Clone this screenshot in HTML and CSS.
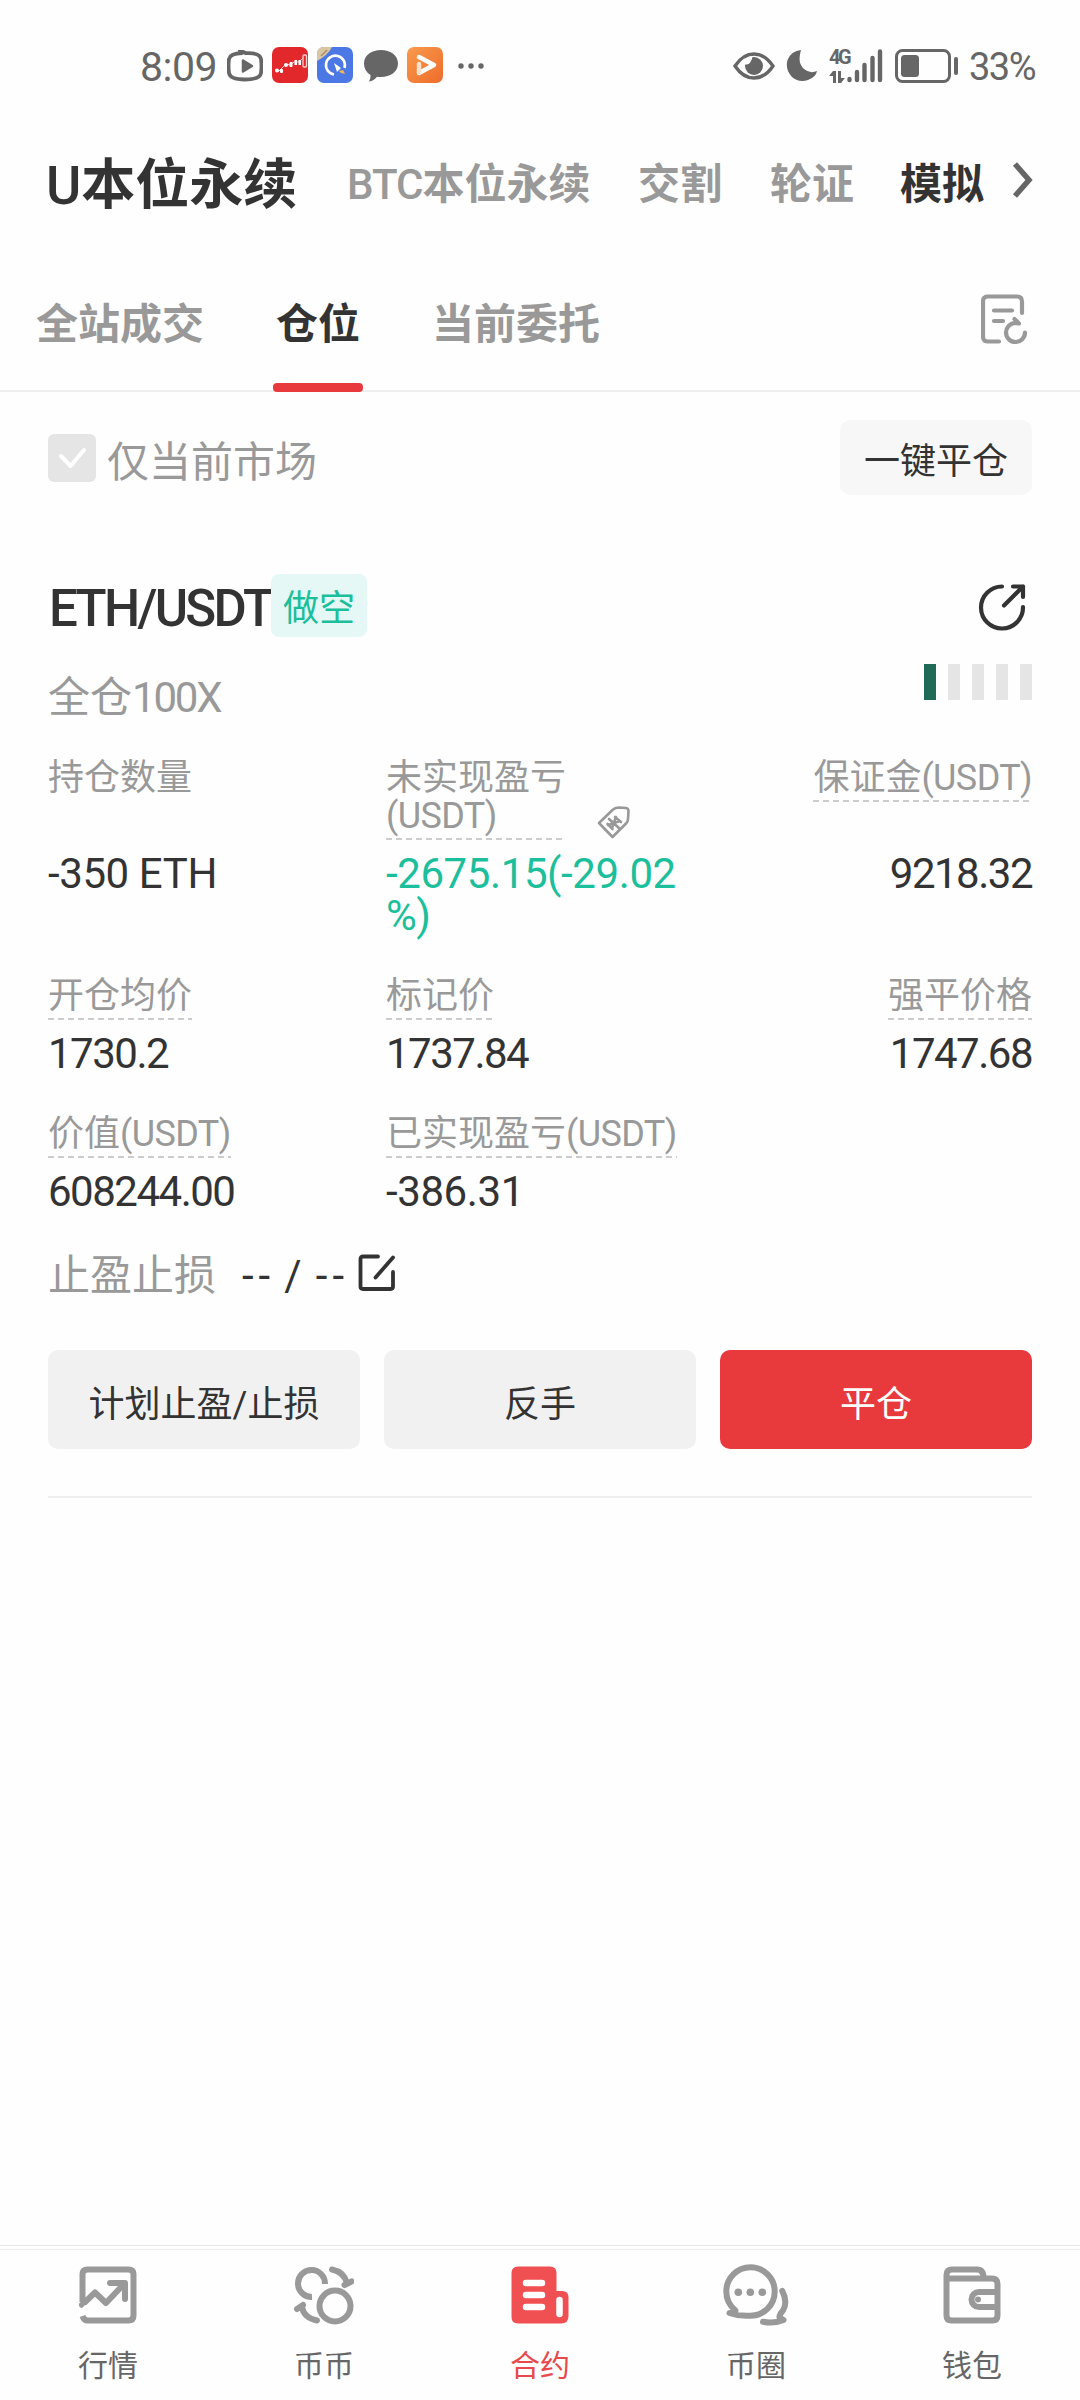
FILE: index.html
```html
<!DOCTYPE html>
<html lang="zh-CN">
<head>
<meta charset="utf-8">
<title>U本位永续</title>
<link rel="stylesheet" href="styles.css">
</head>
<body>
<header class="status">
  <div class="status-left">
    <span class="clock">8:09</span>
    <svg class="s-video" width="36" height="32" viewBox="0 0 36 32"><path d="M15 3 13 .5 19 3.200Q33 2.500 34 9Q35 16 34 23Q33 29.500 18 29.500Q3 29.500 2 23Q1 16 2 9Q3 3.500 15 3Z" fill="none" stroke="#666" stroke-width="3.800" stroke-linejoin="round"/><path d="M16 10.500v11l9-5.500z" fill="#666" stroke="#666" stroke-width="2.500" stroke-linejoin="round"/></svg>
    <svg class="s-app" width="36" height="36" viewBox="0 0 36 36"><rect width="36" height="36" rx="7" fill="#e3282c"/><path d="m3 23 4 1 3-3 4-4 4 1 4-3 5 0 4-4" stroke="#fbd0d0" stroke-width="1" fill="none"/><g fill="#fff"><circle cx="5" cy="23.500" r="2"/><circle cx="14" cy="18" r="2"/><rect x="8" y="22" width="3" height="4" rx="1"/><rect x="17.500" y="15" width="3" height="5" rx="1"/><rect x="22.500" y="13" width="2.500" height="5"/><rect x="26.500" y="13" width="2.500" height="5"/></g><rect x="31" y="8" width="3.500" height="12" rx="1" fill="none" stroke="#fbd0d0" stroke-width="1.300"/></svg>
    <svg class="s-app" width="36" height="36" viewBox="0 0 36 36"><rect width="36" height="36" rx="7" fill="#4b78e4"/><path d="M7 0h8Q11 8 0 14V7Q0 0 7 0Z" fill="#d9c6a4"/><path d="m4 9 6-6" stroke="#a78b62" stroke-width="1.500"/><path d="M17 27.500A9.500 9.500 0 1 1 27.500 21" fill="none" stroke="#fff" stroke-width="2.600"/><path d="m17 16 7 5-4 4z" fill="#fff"/><path d="m22 24 4-1 2 4-4-1z" fill="#f6b64b"/></svg>
    <svg class="s-chat" width="36" height="32" viewBox="0 0 36 32"><path d="M18 0C27 0 35 5 35 13.500S27 27 18 27Q15 27 14 26.800Q11 31 6 31.500Q8 28.500 7.500 25Q1 21 1 13.500C1 5 9 0 18 0Z" fill="#666"/></svg>
    <svg class="s-app" width="36" height="36" viewBox="0 0 36 36"><defs><linearGradient id="og" x2="1" y2="1"><stop stop-color="#f99a4c"/><stop offset="1" stop-color="#ee6c2b"/></linearGradient></defs><rect width="36" height="36" rx="7" fill="url(#og)"/><path d="m12 10 15 8-15 8" fill="none" stroke="#fff" stroke-width="4.500" stroke-linejoin="round" stroke-linecap="round"/><path d="M12 17v8" stroke="#fde0cc" stroke-width="4.500" stroke-linecap="round"/></svg>
    <svg class="s-more" width="26" height="8" viewBox="0 0 26 8" fill="#666"><circle cx="3" cy="4" r="2.700"/><circle cx="13" cy="4" r="2.700"/><circle cx="23" cy="4" r="2.700"/></svg>
  </div>
  <div class="status-right">
    <svg class="s-eye" width="42" height="28" viewBox="0 0 42 28"><path d="M2 14Q10 2 21 2T40 14Q32 26 21 26T2 14Z" fill="none" stroke="#666" stroke-width="3.400"/><circle cx="21" cy="14" r="9" fill="#666"/><path d="M11 12Q16 14 18.500 8Q20 5 18 4L12 7Z" fill="#fff"/></svg>
    <svg class="s-moon" width="32" height="34" viewBox="0 0 32 34"><path d="M15 1Q5 2 1.500 11Q-1 21 6 28Q13 34 22 31Q30 28 31 22Q24 25 18 20Q11 14 15 1Z" fill="#666"/></svg>
    <div class="net"><span class="net-type">4G</span><svg width="16" height="12" viewBox="0 0 16 12" fill="#666"><path d="M4 0h3v12H4V5H0zM9 0h3v7h4l-4 5H9z"/></svg></div>
    <svg class="s-signal" width="36" height="34" viewBox="0 0 36 34" stroke="#666" stroke-width="4.400" stroke-linecap="round"><path d="M2.500 30v1M10 23v8M17.500 16v15M25.500 9v22M33 2.500v28.500"/></svg>
    <svg class="s-batt" width="64" height="34" viewBox="0 0 64 34"><rect x="1.500" y="1.500" width="53" height="31" rx="6" fill="none" stroke="#666" stroke-width="3"/><rect x="6" y="6" width="18" height="22" rx="3.500" fill="#666"/><rect x="59" y="8" width="4" height="18" rx="2" fill="#666"/></svg>
    <span class="percent">33%</span>
  </div>
</header>

<nav class="markets">
  <a class="m-main"><span class="lat">U</span>本位永续</a>
  <a class="m-btc"><span class="lat">BTC</span>本位永续</a>
  <a>交割</a>
  <a>轮证</a>
  <a class="dark">模拟</a>
  <svg width="24" height="38" viewBox="0 0 24 38"><path d="m4 3 14 16L4 35" fill="none" stroke="#666" stroke-width="5.500"/></svg>
</nav>

<nav class="tabs">
  <a>全站成交</a>
  <a class="active">仓位</a>
  <a>当前委托</a>
  <svg width="48" height="52" viewBox="0 0 48 52" fill="none" stroke="#999" stroke-width="4.200" stroke-linecap="round" stroke-linejoin="round"><path d="M18 47.500H7Q2 47.500 2 42.500V7.500Q2 2.500 7 2.500H36Q41 2.500 41 7.500V19M13 16.500H31M13 27H22"/><path d="M44 38.500A9.500 9.500 0 1 1 34 29L38 29.500L33.500 25"/></svg>
</nav>

<section class="filter">
  <label class="only"><svg width="48" height="48" viewBox="0 0 48 48"><rect width="48" height="48" rx="6" fill="#e5e5e5"/><path d="m13 22 9.500 10L36 16" fill="none" stroke="#fff" stroke-width="4" stroke-linecap="round" stroke-linejoin="round"/></svg><span>仅当前市场</span></label>
  <button class="close-all">一键平仓</button>
</section>

<article class="position">
  <div class="title">
    <h2>ETH/USDT</h2><span class="side">做空</span>
    <svg width="48" height="48" viewBox="0 0 48 48" fill="none" stroke="#333" stroke-width="4.200" stroke-linecap="round" stroke-linejoin="round"><path d="M24 3.500A21 21 0 1 0 45 24M35 3.500H45V14M45 3.500 26 22.500"/></svg>
  </div>
  <div class="mode">
    <span>全仓<span class="lat">100X</span></span>
    <div class="risk"><i class="on"></i><i></i><i></i><i></i><i></i></div>
  </div>

  <div class="grid">
    <div class="cell"><div class="label"><span>持仓数量</span></div><div class="value wide">-350 ETH</div></div>
    <div class="cell"><div class="label"><span class="dash pnl">未实现盈亏<br><b class="lat">(USDT)</b></span><svg width="34" height="34" viewBox="0 0 34 34" fill="none" stroke="#999" stroke-width="2.600" stroke-linejoin="round" stroke-linecap="round"><path d="M2 18 16 4.500Q18.500 2.500 22 2.500L29 3Q31.500 3.500 31.500 6L31 14Q31 16.500 29 18.500L15.500 32Z"/><path d="m12 14 10 9M19 12l-4 11M10.500 19l5 5M18 12l6 5M11 20l12-4"/></svg></div><div class="value wide down">-2675.15(-29.02<br>%)</div></div>
    <div class="cell right"><div class="label"><span class="dash">保证金<b class="lat">(USDT)</b></span></div><div class="value">9218.32</div></div>

    <div class="cell"><div class="label"><span class="dash">开仓均价</span></div><div class="value">1730.2</div></div>
    <div class="cell"><div class="label"><span class="dash">标记价</span></div><div class="value">1737.84</div></div>
    <div class="cell right"><div class="label"><span class="dash">强平价格</span></div><div class="value">1747.68</div></div>

    <div class="cell"><div class="label"><span class="dash">价值<b class="lat">(USDT)</b></span></div><div class="value">608244.00</div></div>
    <div class="cell"><div class="label"><span class="dash">已实现盈亏<b class="lat">(USDT)</b></span></div><div class="value wide">-386.31</div></div>
  </div>

  <div class="tpsl">
    <span class="muted">止盈止损</span>
    <span class="tp"><span>--</span><span>/</span><span>--</span></span>
    <svg width="38" height="38" viewBox="0 0 38 38" fill="none" stroke="#333" stroke-width="3.800" stroke-linecap="round" stroke-linejoin="round"><path d="M20 2.500H5Q2.500 2.500 2.500 5V32.500Q2.500 35 5 35H32.500Q35 35 35 32.500V18M35 3.500 17.500 23.500"/></svg>
  </div>

  <div class="actions">
    <button>计划止盈/止损</button>
    <button>反手</button>
    <button class="primary">平仓</button>
  </div>
</article>

<footer class="bottom">
  <a><svg width="60" height="60" viewBox="0 0 60 60" fill="none" stroke="#999" stroke-width="6" stroke-linejoin="round" stroke-linecap="round"><path d="M4.500 37V9.500Q4.500 4.500 9.500 4.500H50.500Q55.500 4.500 55.500 9.500V50.500Q55.500 55.500 50.500 55.500H9.500Q6 55.500 4.500 51" stroke-linecap="butt"/><path d="M4 40 17 27.500 28 38 45 20M32 18H47V34"/><path d="M2 48 8 42" stroke="#fff" stroke-width="4"/></svg><span>行情</span></a>
  <a><svg width="60" height="60" viewBox="0 0 60 60" fill="none" stroke="#999" stroke-width="6" stroke-linejoin="round" stroke-linecap="round"><path d="M31 19A13.500 13.500 0 1 0 18 32" stroke-linecap="butt"/><circle cx="41" cy="41" r="15.500"/><path d="M38 4.500Q50 7 53 18M50.500 20 57.500 16.500M23 55.500Q10 53 8 42M3 44 9 40"/></svg><span>币币</span></a>
  <a class="active"><svg width="60" height="60" viewBox="0 0 60 60"><path d="M8 1.500H40Q46.500 1.500 46.500 8V26H52Q58.500 26 58.500 32V51Q58.500 58.500 51 58.500H8Q1.500 58.500 1.500 52V8Q1.500 1.500 8 1.500Z" fill="#f05052"/><path d="M16 18H32M16 30H32M16 42H32M49.500 35V49" stroke="#fff" stroke-width="6.500" stroke-linecap="round"/></svg><span>合约</span></a>
  <a><svg class="talk" width="70" height="64" viewBox="0 0 70 64" fill="none" stroke="#999" stroke-width="6" stroke-linejoin="round" stroke-linecap="round"><path d="M14.500 47.500Q5.300 40 5.300 28.500A24.200 24.200 0 1 1 29.500 52.700Q18 53.500 8.500 50Q14.500 50.500 14.500 47.500Z"/><path d="M61.300 28Q67 39 62 47.500Q58 52 58.500 54.500L62.500 57Q53 61 42 58.800"/><g fill="#999" stroke="none"><circle cx="17.300" cy="29.300" r="3.800"/><circle cx="29.300" cy="29.300" r="3.800"/><circle cx="41.300" cy="29.300" r="3.800"/></g></svg><span>币圈</span></a>
  <a><svg width="60" height="60" viewBox="0 0 60 60" fill="none" stroke="#999" stroke-width="6" stroke-linejoin="round"><path d="M4.500 13.500H50Q55.500 13.500 55.500 19V50.500Q55.500 55.500 50.500 55.500H9.500Q4.500 55.500 4.500 50.500V10Q4.500 4.500 10 4.500H35Q41.500 4.500 41.500 13M56 27H37A7.500 7.500 0 0 0 37 42H56"/><circle cx="36" cy="34.500" r="3" fill="#999" stroke="none"/></svg><span>钱包</span></a>
</footer>
</body>
</html>
```
FILE: styles.css
```css
* { box-sizing: border-box; }

body {
  margin: 0;
  width: 1080px;
  height: 2400px;
  display: flex;
  flex-direction: column;
  background: #fefefe;
  color: #333;
  font-family: Roboto, "Noto Sans CJK SC", sans-serif;
  font-size: 42px;
}

svg { display: block; flex: none; }
button { border: 0; padding: 0; font: inherit; color: inherit; }

/* status bar */
.status {
  height: 132px;
  padding: 0 41px 0 140px;
  display: flex;
  justify-content: space-between;
  align-items: center;
  color: #666;
}
.status-left, .status-right { display: flex; align-items: center; }
.clock { width: 87px; font-size: 41px; line-height: 48px; letter-spacing: -0.5px; padding-top: 2px; white-space: nowrap; }
.s-app { margin-left: 9px; margin-top: -2px; }
.s-chat { margin-left: 10px; }
.s-chat + .s-app { margin-left: 8px; }
.s-more { margin-left: 15px; }
.s-moon { margin-left: 11px; }
.net {
  width: 18px;
  margin-left: 11px;
  display: flex;
  flex-direction: column;
  gap: 5px;
}
.net-type { font-size: 20px; line-height: 17px; font-weight: 700; letter-spacing: -2.5px; }
.s-batt { margin-left: 12px; }
.percent { margin-left: 10px; width: 70px; font-size: 38px; line-height: 44px; letter-spacing: -1.5px; padding-top: 2px; white-space: nowrap; }

/* market switcher */
.markets {
  height: 104px;
  padding: 2px 0 0 46px;
  display: flex;
  align-items: center;
  font-weight: 700;
  color: #999;
  line-height: 60px;
  white-space: nowrap;
}
.markets a { margin-right: 48px; }
.markets .m-main { width: 253px; font-size: 54px; color: #333; padding-top: 2px; }
.markets .m-btc { width: 243px; margin-right: 48px; }
.markets .lat { font-weight: 500; letter-spacing: -1px; }
.markets .m-main .lat { letter-spacing: 0; }
.markets a:nth-child(4) { margin-right: 46px; }
.markets .dark { color: #333; margin-right: 27px; }
.markets svg { margin-top: -10px; }

/* tabs */
.tabs {
  height: 156px;
  padding: 22px 51px 0 36px;
  display: flex;
  align-items: center;
  border-bottom: 2px solid #eee;
  font-weight: 700;
  color: #999;
}
.tabs a { position: relative; height: 134px; line-height: 136px; margin-right: 72px; }
.tabs .active { color: #333; }
.tabs .active::after {
  content: "";
  position: absolute;
  left: -3px;
  right: -3px;
  bottom: -1px;
  height: 9px;
  border-radius: 4px;
  background: #e83a3c;
}
.tabs svg { margin-left: auto; margin-top: -8px; }

/* filter */
.filter {
  padding: 28px 48px 0;
  display: flex;
  justify-content: space-between;
}
.only { display: flex; align-items: center; gap: 11px; height: 75px; color: #999; }
.only span { padding-top: 2px; }
.close-all {
  width: 192px;
  height: 75px;
  padding-top: 1px;
  border-radius: 10px;
  background: #f7f7f7;
  font-size: 36px;
}

/* position card */
.position {
  margin: 79px 48px 0;
  padding-bottom: 47px;
  border-bottom: 2px solid #eee;
}
.title { height: 63px; display: flex; align-items: center; }
.title h2 { margin: 6px 0 0; width: 223px; padding-left: 1px; font-size: 51px; line-height: 60px; font-weight: 500; letter-spacing: -2.7px; white-space: nowrap; }
.side {
  width: 96px;
  height: 63px;
  line-height: 71px;
  border-radius: 8px;
  background: #e5f8f5;
  color: #1cbf9b;
  font-size: 36px;
  text-align: center;
}
.title svg { margin: 2px 6px 0 auto; }
.mode {
  height: 68px;
  margin-top: 27px;
  display: flex;
  justify-content: space-between;
  line-height: 68px;
  color: #999;
}
.mode .lat { letter-spacing: -2.2px; }
.risk { display: flex; gap: 12px; }
.risk i { width: 12px; height: 36px; background: #e5e5e5; }
.risk .on { background: #206a58; }

.grid {
  margin-top: 27px;
  display: grid;
  grid-template-columns: 338px 300px 346px;
  row-gap: 41px;
}
.cell { display: flex; flex-direction: column; justify-content: flex-start; }
.right { align-items: flex-end; }
.label { display: flex; min-height: 56px; align-items: flex-start; font-size: 36px; line-height: 38px; color: #999; white-space: nowrap; }
.label .lat { font-weight: 400; letter-spacing: -0.6px; }
.grid > :nth-child(-n+3) .label { height: 94px; }
.label svg { margin: 46px 0 0 34px; }
.dash {
  padding-bottom: 5px;
  background: repeating-linear-gradient(90deg, #ccc 0 6px, transparent 6px 10px) 0 100% / 100% 2px no-repeat;
}
.pnl { width: 177px; }
.value { line-height: 42px; margin-bottom: -1px; letter-spacing: -1.5px; white-space: nowrap; }
.value.wide { letter-spacing: -0.4px; }
.down { color: #1cbf9b; }

.tpsl { margin-top: 34px; height: 60px; display: flex; align-items: center; line-height: 60px; }
.muted { color: #999; width: 168px; }
.tp { width: 107px; margin-left: 26px; display: flex; justify-content: space-between; letter-spacing: 5px; }
.tpsl svg { margin-left: 9px; margin-top: -7px; }

.actions { margin-top: 44px; display: grid; grid-template-columns: repeat(3, 1fr); gap: 24px; }
.actions button { height: 99px; padding-top: 3px; border-radius: 10px; background: #f1f1f1; font-size: 36px; }
.actions .primary { background: #e83a3c; color: #fff; }

/* bottom navigation */
.bottom {
  height: 155px;
  margin-top: auto;
  display: grid;
  grid-template-columns: repeat(5, 1fr);
  border-top: 1px solid #e8e8e8;
  background: linear-gradient(#eee, #eee) 0 3px / 100% 1px no-repeat;
  color: #666;
  font-size: 30px;
}
.bottom a { display: flex; flex-direction: column; align-items: center; padding-top: 19px; }
.bottom svg { height: 60px; }
.bottom .talk { height: 64px; margin: -2px 0; }
.bottom span { margin-top: 23px; line-height: 36px; }
.bottom .active { color: #e8494c; }
```
